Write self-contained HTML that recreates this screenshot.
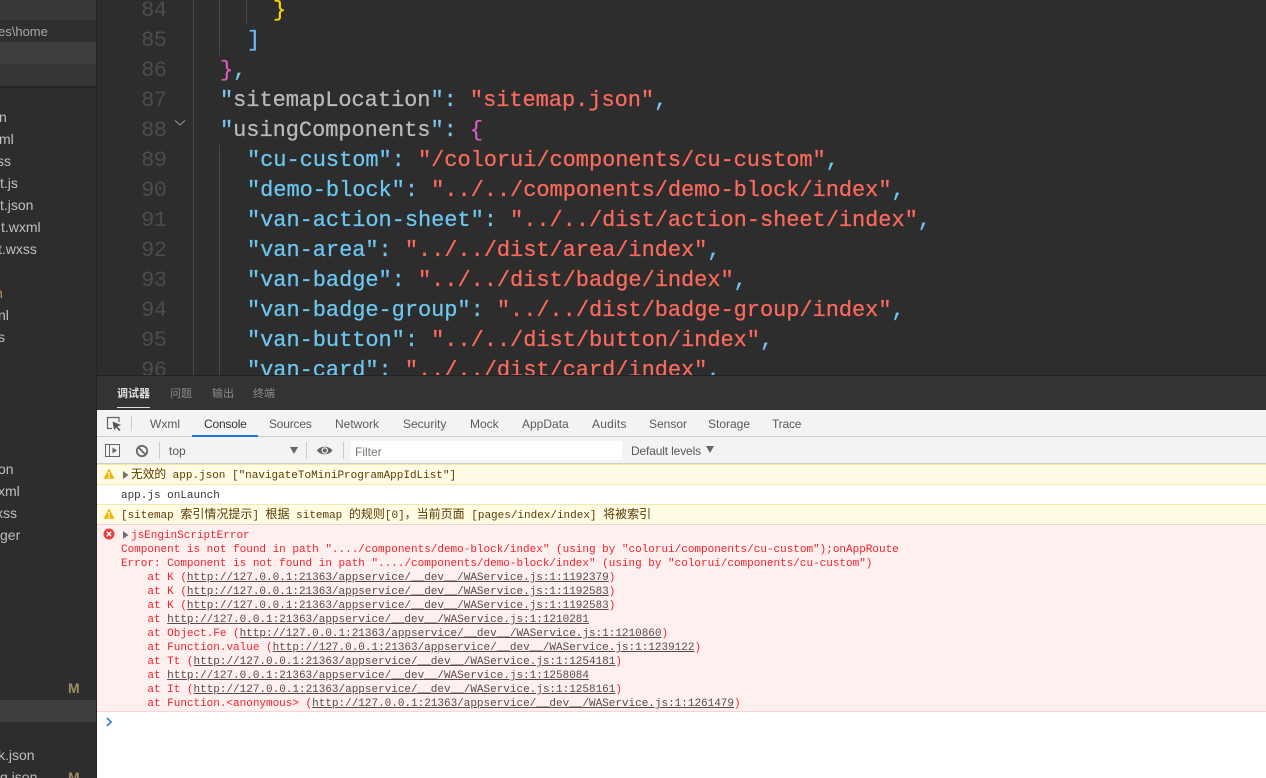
<!DOCTYPE html>
<html><head><meta charset="utf-8">
<style>
html,body{margin:0;padding:0;width:1266px;height:778px;overflow:hidden;background:#2d2d2d}
*{box-sizing:border-box}
.a{position:absolute}
.t{position:absolute;white-space:pre}
#side .t{font:14px/20px "Liberation Sans",sans-serif;color:#c0c0c0}
.ln{position:absolute;left:130px;width:36.5px;text-align:right;font:22px/30px "Liberation Mono",monospace;color:#4c4c4c;letter-spacing:-.5px}
.c{position:absolute;left:0;white-space:pre;font:22px/30px "Liberation Mono",monospace;color:#bababa;letter-spacing:-.05px;-webkit-text-stroke:.25px currentColor}
.q{color:#7cc5ee}.k{color:#6cc6f0}.s{color:#fb6a5c}
.g{position:absolute;width:1px;background:#484848}
.tab{position:absolute;top:411px;height:26px;font:12px/26px "Liberation Sans","Noto Sans CJK SC",sans-serif;color:#5a5a5a;white-space:pre}
.dt{position:absolute;top:384px;font:11px/18px "Noto Sans CJK SC","WenQuanYi Zen Hei",sans-serif;color:#8c8c8c;white-space:pre}
.m{position:absolute;white-space:pre;font:11px/14px "Liberation Mono","Noto Sans CJK SC",monospace;letter-spacing:-.01px}
.m b{font-weight:normal;font-size:11.7px;letter-spacing:0;font-family:"Noto Sans CJK SC",sans-serif}
.m.w b{font-size:12px}
.e{color:#f0232d;left:121px}
u{color:#5c4a4a}
</style></head><body>
<div id="side" class="a" style="left:0;top:0;width:97px;height:778px;background:#2d2d2d;border-right:1px solid #252525;overflow:hidden">
<div class="a" style="left:0;top:0;width:96px;height:20px;background:#383838"></div>
<div class="a" style="left:0;top:20px;width:96px;height:22px;background:#2f2f2f"></div>
<div class="a" style="left:0;top:42px;width:96px;height:22px;background:#3e3e3e"></div>
<div class="a" style="left:0;top:64px;width:96px;height:22px;background:#363636"></div>
<div class="a" style="left:0;top:86px;width:96px;height:2px;background:#222"></div>
<div class="t" style="left:-2px;top:22px;color:#a8a8a8;font-size:13px">es\home</div>
<div class="t" style="left:-1px;top:107px">n</div>
<div class="t" style="left:-1px;top:129px">ml</div>
<div class="t" style="left:-3px;top:151px">ss</div>
<div class="t" style="left:0;top:173px">t.js</div>
<div class="t" style="left:0;top:195px">t.json</div>
<div class="t" style="left:1px;top:217px">t.wxml</div>
<div class="t" style="left:-2px;top:239px">t.wxss</div>
<div class="t" style="left:-5px;top:283px;color:#c89060">n</div>
<div class="t" style="left:-2px;top:305px">nl</div>
<div class="t" style="left:-2px;top:327px">s</div>
<div class="t" style="left:-2px;top:459px">on</div>
<div class="t" style="left:-2px;top:481px">xml</div>
<div class="t" style="left:-4px;top:503px">xss</div>
<div class="t" style="left:0;top:525px">ger</div>
<div class="a" style="left:0;top:700px;width:96px;height:22px;background:#3e3e3e"></div>
<div class="t" style="left:68px;top:678px;color:#a08c64;font-weight:bold">M</div>
<div class="t" style="left:-2px;top:745px">k.json</div>
<div class="t" style="left:0;top:767px">g.json</div>
<div class="t" style="left:68px;top:767px;color:#a08c64;font-weight:bold">M</div>
</div>

<div id="ed" class="a" style="left:97px;top:0;width:1169px;height:376px;background:#2d2d2d;overflow:hidden"></div>
<div class="g" style="left:193px;top:0;height:376px"></div>
<div class="g" style="left:219px;top:0;height:55px"></div>
<div class="g" style="left:246px;top:0;height:25px"></div>
<div class="g" style="left:219px;top:145px;height:231px"></div>

<div class="a" style="left:0;top:0;width:1266px;height:376px;overflow:hidden">
<div class="ln" style="top:-4px">84</div>
<div class="ln" style="top:26px">85</div>
<div class="ln" style="top:56px">86</div>
<div class="ln" style="top:86px">87</div>
<div class="ln" style="top:116px">88</div>
<div class="ln" style="top:146px">89</div>
<div class="ln" style="top:176px">90</div>
<div class="ln" style="top:206px">91</div>
<div class="ln" style="top:236px">92</div>
<div class="ln" style="top:266px">93</div>
<div class="ln" style="top:296px">94</div>
<div class="ln" style="top:326px">95</div>
<div class="ln" style="top:356px">96</div>
<svg class="a" style="left:174px;top:119px" width="12" height="8"><path d="M1 1.5L6 6L11 1.5" fill="none" stroke="#9a9a9a" stroke-width="1"/></svg>
<div class="c" style="left:273px;top:-4px;color:#ffd400">}</div>
<div class="c" style="left:247px;top:26px;color:#6cb6f5">]</div>
<div class="c" style="left:220px;top:56px"><span style="color:#d65cc4">}</span><span class="q">,</span></div>
<div class="c" style="left:220px;top:86px"><span class="q">"</span>sitemapLocation<span class="q">": </span><span class="s">"sitemap.json"</span><span class="q">,</span></div>
<div class="c" style="left:220px;top:116px"><span class="q">"</span>usingComponents<span class="q">": </span><span style="color:#d65cc4">{</span></div>
<div class="c k" style="left:247px;top:146px">"cu-custom": <span class="s">"/colorui/components/cu-custom"</span>,</div>
<div class="c k" style="left:247px;top:176px">"demo-block": <span class="s">"../../components/demo-block/index"</span>,</div>
<div class="c k" style="left:247px;top:206px">"van-action-sheet": <span class="s">"../../dist/action-sheet/index"</span>,</div>
<div class="c k" style="left:247px;top:236px">"van-area": <span class="s">"../../dist/area/index"</span>,</div>
<div class="c k" style="left:247px;top:266px">"van-badge": <span class="s">"../../dist/badge/index"</span>,</div>
<div class="c k" style="left:247px;top:296px">"van-badge-group": <span class="s">"../../dist/badge-group/index"</span>,</div>
<div class="c k" style="left:247px;top:326px">"van-button": <span class="s">"../../dist/button/index"</span>,</div>
<div class="c k" style="left:247px;top:356px">"van-card": <span class="s">"../../dist/card/index"</span>,</div>
</div>

<div class="a" style="left:97px;top:375px;width:1169px;height:35px;background:#333;border-top:1px solid #222"></div>
<div class="dt" style="left:117px;color:#e0e0e0;font-weight:bold">调试器</div>
<div class="a" style="left:117px;top:407px;width:33px;height:1px;background:#ddd"></div>
<div class="dt" style="left:170px">问题</div>
<div class="dt" style="left:212px">输出</div>
<div class="dt" style="left:253px">终端</div>

<div class="a" style="left:97px;top:410px;width:1169px;height:368px;background:#fff"></div>
<div class="a" style="left:97px;top:410px;width:1169px;height:27px;background:#f3f3f3;border-bottom:1px solid #ccc"></div>
<svg class="a" style="left:106px;top:416px" width="16" height="16"><path d="M6 12.5H1.5V1.5H13V6" fill="none" stroke="#666" stroke-width="1.2"/><path d="M6.5 5.5L15 9L11.5 10.5L14.5 14L13 15L10.5 11.5L8 14Z" fill="#555"/></svg>
<div class="a" style="left:131px;top:416px;width:1px;height:15px;background:#ccc"></div>
<div class="tab" style="left:150px">Wxml</div>
<div class="tab" style="left:204px;color:#333;letter-spacing:-.2px">Console</div>
<div class="a" style="left:192px;top:435px;width:66px;height:2px;background:#1a73e8"></div>
<div class="tab" style="left:269px;letter-spacing:-.2px">Sources</div>
<div class="tab" style="left:335px">Network</div>
<div class="tab" style="left:403px">Security</div>
<div class="tab" style="left:470px">Mock</div>
<div class="tab" style="left:522px">AppData</div>
<div class="tab" style="left:592px;letter-spacing:.2px">Audits</div>
<div class="tab" style="left:649px">Sensor</div>
<div class="tab" style="left:708px">Storage</div>
<div class="tab" style="left:772px;letter-spacing:-.2px">Trace</div>

<div class="a" style="left:97px;top:437px;width:1169px;height:27px;background:#f3f3f3;border-bottom:1px solid #ccc"></div>
<svg class="a" style="left:105px;top:443px" width="16" height="15"><rect x=".5" y="1.5" width="14" height="12" fill="none" stroke="#666"/><path d="M4.5 1.5V13.5" stroke="#666"/><path d="M7.5 4.5L12 7.5L7.5 10.5Z" fill="#666"/></svg>
<svg class="a" style="left:135px;top:444px" width="14" height="14"><circle cx="7" cy="7" r="5.2" fill="none" stroke="#6a6a6a" stroke-width="1.8"/><path d="M3.3 3.3L10.7 10.7" stroke="#6a6a6a" stroke-width="1.8"/></svg>
<div class="a" style="left:159px;top:442px;width:1px;height:17px;background:#ccc"></div>
<div class="tab" style="left:169px;top:438px;height:26px">top</div>
<svg class="a" style="left:290px;top:447px" width="9" height="8"><path d="M0 0H8L4 7Z" fill="#666"/></svg>
<div class="a" style="left:306px;top:442px;width:1px;height:17px;background:#ccc"></div>
<svg class="a" style="left:316px;top:444px" width="18" height="13"><path d="M1 6.5C4 1.5 13 1.5 16.5 6.5C13 11.5 4 11.5 1 6.5Z" fill="#666"/><circle cx="8.8" cy="6.5" r="3.2" fill="#f3f3f3"/><circle cx="8.8" cy="6.5" r="2" fill="#666"/></svg>
<div class="a" style="left:343px;top:442px;width:1px;height:17px;background:#ccc"></div>
<div class="a" style="left:351px;top:441px;width:271px;height:19px;background:#fff"></div>
<div class="tab" style="left:355px;top:439px;height:26px;color:#777">Filter</div>
<div class="tab" style="left:631px;top:438px;height:26px;letter-spacing:-.15px">Default levels</div>
<svg class="a" style="left:705.5px;top:446px" width="9" height="8"><path d="M0 0H8L4 7Z" fill="#666"/></svg>

<div class="a" style="left:97px;top:464px;width:1169px;height:21px;background:#fffbe5;border-top:1px solid #f5e8a8;border-bottom:1px solid #f5e8a8"></div>
<div class="a" style="left:97px;top:504px;width:1169px;height:21px;background:#fffbe5;border-top:1px solid #f5e8a8;border-bottom:1px solid #f9d0d0"></div>
<div class="a" style="left:97px;top:525px;width:1169px;height:187px;background:#fff0f0;border-bottom:1px solid #fbd5d5"></div>

<svg class="a" style="left:103px;top:468px" width="12" height="12"><path d="M6 .5L11.5 10.8H.5Z" fill="#f4b400"/><path d="M6 4V7.5M6 8.5V10" stroke="#fff" stroke-width="1.3"/></svg>
<svg class="a" style="left:103px;top:508px" width="12" height="12"><path d="M6 .5L11.5 10.8H.5Z" fill="#f4b400"/><path d="M6 4V7.5M6 8.5V10" stroke="#fff" stroke-width="1.3"/></svg>
<svg class="a" style="left:103px;top:528px" width="12" height="12"><circle cx="6" cy="6" r="5.5" fill="#e8403a"/><path d="M3.8 3.8L8.2 8.2M8.2 3.8L3.8 8.2" stroke="#fff" stroke-width="1.4"/></svg>
<svg class="a" style="left:123px;top:471px" width="6" height="8"><path d="M0 0L5.5 4L0 8Z" fill="#727272"/></svg>
<svg class="a" style="left:123px;top:531px" width="6" height="8"><path d="M0 0L5.5 4L0 8Z" fill="#727272"/></svg>

<div class="m" style="left:131px;top:467px;color:#5c3c00"><b>无效的</b> app.json ["navigateToMiniProgramAppIdList"]</div>
<div class="m" style="left:121px;top:489px;color:#333">app.js onLaunch</div>
<div class="m w" style="left:121px;top:507px;color:#5c3c00">[sitemap <b>索引情况提示</b>] <b>根据</b> sitemap <b>的规则</b>[0]<b>，当前页面</b> [pages/index/index] <b>将被索引</b></div>
<div class="m" style="left:131px;top:529px;color:#f0232d">jsEnginScriptError</div>
<div class="m e" style="top:543px">Component is not found in path "..../components/demo-block/index" (using by "colorui/components/cu-custom");onAppRoute</div>
<div class="m e" style="top:557px">Error: Component is not found in path "..../components/demo-block/index" (using by "colorui/components/cu-custom")</div>
<div class="m e" style="top:571px">    at K (<u>http://127.0.0.1:21363/appservice/__dev__/WAService.js:1:1192379</u>)</div>
<div class="m e" style="top:585px">    at K (<u>http://127.0.0.1:21363/appservice/__dev__/WAService.js:1:1192583</u>)</div>
<div class="m e" style="top:599px">    at K (<u>http://127.0.0.1:21363/appservice/__dev__/WAService.js:1:1192583</u>)</div>
<div class="m e" style="top:613px">    at <u>http://127.0.0.1:21363/appservice/__dev__/WAService.js:1:1210281</u></div>
<div class="m e" style="top:627px">    at Object.Fe (<u>http://127.0.0.1:21363/appservice/__dev__/WAService.js:1:1210860</u>)</div>
<div class="m e" style="top:641px">    at Function.value (<u>http://127.0.0.1:21363/appservice/__dev__/WAService.js:1:1239122</u>)</div>
<div class="m e" style="top:655px">    at Tt (<u>http://127.0.0.1:21363/appservice/__dev__/WAService.js:1:1254181</u>)</div>
<div class="m e" style="top:669px">    at <u>http://127.0.0.1:21363/appservice/__dev__/WAService.js:1:1258084</u></div>
<div class="m e" style="top:683px">    at It (<u>http://127.0.0.1:21363/appservice/__dev__/WAService.js:1:1258161</u>)</div>
<div class="m e" style="top:697px">    at Function.&lt;anonymous&gt; (<u>http://127.0.0.1:21363/appservice/__dev__/WAService.js:1:1261479</u>)</div>
<svg class="a" style="left:106px;top:717px" width="7" height="10"><path d="M1 1L5 5L1 9" fill="none" stroke="#3b78e7" stroke-width="1.6"/></svg>
</body></html>
